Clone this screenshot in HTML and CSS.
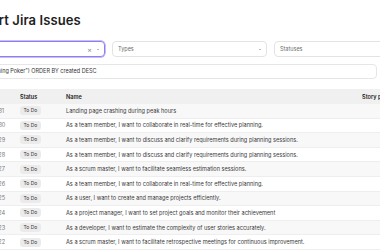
FILE: index.html
```html
<!DOCTYPE html>
<html>
<head>
<meta charset="utf-8">
<link rel="stylesheet" href="styles.css">
</head>
<body>
<div class="page">
  <h1 class="title">Import Jira Issues</h1>
  <div class="filters">
    <div class="select select-active">
      <span class="select-value">Planning Poker</span>
      <span class="select-icons"><span class="clear">×</span><span class="caret"></span></span>
    </div>
    <div class="select">
      <span class="placeholder">Types</span>
      <span class="select-icons"><span class="caret"></span></span>
    </div>
    <div class="select">
      <span class="placeholder">Statuses</span>
      <span class="select-icons"><span class="caret"></span></span>
    </div>
  </div>
  <div class="jql">project in ("Planning Poker") ORDER BY created DESC</div>
  <table class="issues">
    <thead>
      <tr><th class="c-key">Key</th><th class="c-status">Status</th><th class="c-name">Name</th><th class="c-sp">Story points</th></tr>
    </thead>
    <tbody>
      <tr><td class="c-key">PP-31</td><td class="c-status"><span class="badge">To Do</span></td><td class="c-name">Landing page crashing during peak hours</td><td class="c-sp"></td></tr>
      <tr><td class="c-key">PP-30</td><td class="c-status"><span class="badge">To Do</span></td><td class="c-name">As a team member, I want to collaborate in real-time for effective planning.</td><td class="c-sp"></td></tr>
      <tr><td class="c-key">PP-29</td><td class="c-status"><span class="badge">To Do</span></td><td class="c-name">As a team member, I want to discuss and clarify requirements during planning sessions.</td><td class="c-sp"></td></tr>
      <tr><td class="c-key">PP-28</td><td class="c-status"><span class="badge">To Do</span></td><td class="c-name">As a team member, I want to discuss and clarify requirements during planning sessions.</td><td class="c-sp"></td></tr>
      <tr><td class="c-key">PP-27</td><td class="c-status"><span class="badge">To Do</span></td><td class="c-name">As a scrum master, I want to facilitate seamless estimation sessions.</td><td class="c-sp"></td></tr>
      <tr><td class="c-key">PP-26</td><td class="c-status"><span class="badge">To Do</span></td><td class="c-name">As a team member, I want to collaborate in real-time for effective planning.</td><td class="c-sp"></td></tr>
      <tr><td class="c-key">PP-25</td><td class="c-status"><span class="badge">To Do</span></td><td class="c-name">As a user, I want to create and manage projects efficiently.</td><td class="c-sp"></td></tr>
      <tr><td class="c-key">PP-24</td><td class="c-status"><span class="badge">To Do</span></td><td class="c-name">As a project manager, I want to set project goals and monitor their achievement</td><td class="c-sp"></td></tr>
      <tr><td class="c-key">PP-23</td><td class="c-status"><span class="badge">To Do</span></td><td class="c-name">As a developer, I want to estimate the complexity of user stories accurately.</td><td class="c-sp"></td></tr>
      <tr><td class="c-key">PP-22</td><td class="c-status"><span class="badge">To Do</span></td><td class="c-name">As a scrum master, I want to facilitate retrospective meetings for continuous improvement.</td><td class="c-sp"></td></tr>
    </tbody>
  </table>
</div>
</body>
</html>
```
FILE: styles.css
```css
html, body {
  margin: 0;
  padding: 0;
  background: #ffffff;
  overflow: hidden;
}
body {
  font-family: Inter, "Liberation Sans", sans-serif;
  color: #2b2b2b;
}
.page {
  margin-left: -50px;
  width: 480px;
  padding-top: 11px;
}
.title {
  margin: 0 0 0 17px;
  font-size: 13px;
  font-weight: 600;
  line-height: 18px;
  color: #1e1e1e;
  letter-spacing: 0.1px;
}
.filters {
  display: flex;
  gap: 7px;
  margin-top: 12px;
}
.select {
  box-sizing: border-box;
  height: 16px;
  width: 155px;
  border: 1px solid #e3e3e3;
  border-radius: 4px;
  display: flex;
  align-items: center;
  justify-content: space-between;
  padding: 0 5px;
  font-size: 5.5px;
  flex: none;
}
.select-active {
  border-color: #8f7ef0;
  box-shadow: 0 0 0 0.5px #8f7ef0;
}
.select-value {
  color: #333;
}
.placeholder {
  color: #6d6d6d;
}
.select-icons {
  display: flex;
  align-items: center;
  gap: 5px;
}
.clear {
  color: #8a8a8a;
  font-size: 7px;
  line-height: 1;
}
.caret {
  width: 0;
  height: 0;
  border-left: 1.6px solid transparent;
  border-right: 1.6px solid transparent;
  border-top: 1.8px solid #777;
}
.jql {
  box-sizing: border-box;
  margin-top: 7px;
  height: 15px;
  width: 427px;
  border: 1px solid #e6e6e6;
  border-radius: 4px;
  font-size: 5.5px;
  line-height: 13px;
  padding-left: 5px;
  color: #333;
  white-space: nowrap;
}
.issues {
  margin-top: 10px;
  border-collapse: collapse;
  width: 497px;
  font-size: 5.6px;
}
.issues th {
  background: #f0f0f0;
  height: 15px;
  padding: 0;
  text-align: left;
  font-weight: 600;
  color: #222;
}
.issues td {
  height: 13.6px;
  padding: 0;
  border-bottom: 1px solid #eeeeee;
  white-space: nowrap;
  color: #3a3a3a;
}
.issues tbody tr:nth-child(odd) td {
  background: #f8f8f8;
}
.issues .c-key {
  box-sizing: border-box;
  width: 70px;
  padding-left: 39px;
  color: #7a7a7a;
}
.c-status { width: 46px; }
.c-name { width: 296px; }
.c-sp { width: 85px; }
.badge {
  display: inline-block;
  background: #ebebeb;
  border-radius: 3px;
  padding: 0 3.5px;
  height: 9px;
  line-height: 9px;
  font-size: 5px;
  color: #333;
}
```
